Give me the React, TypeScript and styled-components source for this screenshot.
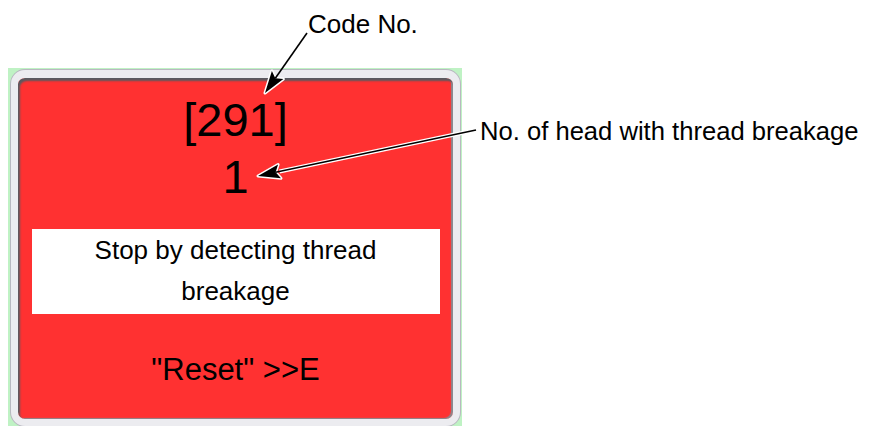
import styled, { createGlobalStyle } from 'styled-components'

const GlobalStyle = createGlobalStyle`
	html, body {
		margin: 0;
		padding: 0;
		background: #fff;
	}
	body {
		font-family: "Liberation Sans", Arial, sans-serif;
		color: #000;
	}
`

type Pt = [number, number]

// arrow with a white halo, tip at `to`
function Arrow({ from, to, halo }: { from: Pt, to: Pt, halo?: boolean }) {
	const [x1, y1] = from
	const [x2, y2] = to
	const len = Math.hypot(x2 - x1, y2 - y1)
	const ux = (x2 - x1) / len
	const uy = (y2 - y1) / len
	const headLen = 22
	const headW = 7
	const bx = x2 - ux * headLen
	const by = y2 - uy * headLen
	const head = `${x2},${y2} ${bx - uy * headW},${by + ux * headW} ${bx + 4 * ux},${by + 4 * uy} ${bx + uy * headW},${by - ux * headW}`
	return (
		<g>
			{halo && <line x1={x1} y1={y1} x2={bx} y2={by} stroke="#fff" strokeWidth={4} />}
			<polygon points={head} fill="#fff" stroke="#fff" strokeWidth={3} strokeLinejoin="round" />
			<line x1={x1} y1={y1} x2={bx + 4 * ux} y2={by + 4 * uy} stroke="#000" strokeWidth={1.6} />
			<polygon points={head} fill="#000" />
		</g>
	)
}

function App() {
	return (
		<>
			<GlobalStyle />
			<Page>
				<Left>
					<Caption $indent={300}>Code No.</Caption>
					<Panel>
						<Frame>
							<BigNumber>[291]</BigNumber>
							<BigNumber $tight>1</BigNumber>
							<Message>Stop by detecting thread<br />breakage</Message>
							<Reset>"Reset" &gt;&gt;E</Reset>
						</Frame>
					</Panel>
				</Left>
				<Right>
					<Caption>No. of head with thread breakage</Caption>
				</Right>
				<Overlay width={876} height={426} viewBox="0 0 876 426">
					<Arrow from={[307, 33]} to={[265, 93]} />
					<Arrow from={[476, 130]} to={[258, 176]} halo />
				</Overlay>
			</Page>
		</>
	)
}

export default App

const Page = styled.div`
	position: relative;
	width: 876px;
	height: 426px;
	overflow: hidden;
	display: flex;
	align-items: flex-start;
`

const Left = styled.div`
	width: 454px;
	margin-left: 8px;
	display: flex;
	flex-direction: column;
`

const Right = styled.div`
	padding-top: 116px;
	padding-left: 18px;
`

const Caption = styled.div<{ $indent?: number }>`
	font-size: ${p => p.$indent ? 26 : 25.6}px;
	line-height: 30px;
	white-space: nowrap;
	padding-left: ${p => p.$indent ?? 0}px;
	padding-top: ${p => p.$indent ? 9 : 0}px;
	height: ${p => p.$indent ? 59 : 30}px;
`

const Panel = styled.div`
	background: #bff2c4;
	padding: 2px 2px 4px 3px;
	height: 362px;
	box-sizing: border-box;
`

const Frame = styled.div`
	height: 356px;
	box-sizing: border-box;
	background: #ff3131;
	border: 7px solid #ececf0;
	border-top-width: 8px;
	border-radius: 14px;
	box-shadow:
		0 0 0 1px #b8b8c0,
		inset 2px 3px 2px #5a5a60,
		inset -2px -1px 1px #8a8a90;
	display: flex;
	flex-direction: column;
	align-items: center;
	padding-top: 16px;
`

const BigNumber = styled.div<{ $tight?: boolean }>`
	font-size: 47px;
	line-height: 52px;
	margin-top: ${p => p.$tight ? 5 : 0}px;
`

const Message = styled.div`
	margin-top: 26px;
	width: 408px;
	height: 85px;
	background: #fff;
	font-size: 26px;
	line-height: 41px;
	text-align: center;
	padding-top: 1px;
	box-sizing: border-box;
`

const Reset = styled.div`
	margin-top: 38px;
	font-size: 31px;
	line-height: 36px;
`

const Overlay = styled.svg`
	position: absolute;
	left: 0;
	top: 0;
	pointer-events: none;
`
